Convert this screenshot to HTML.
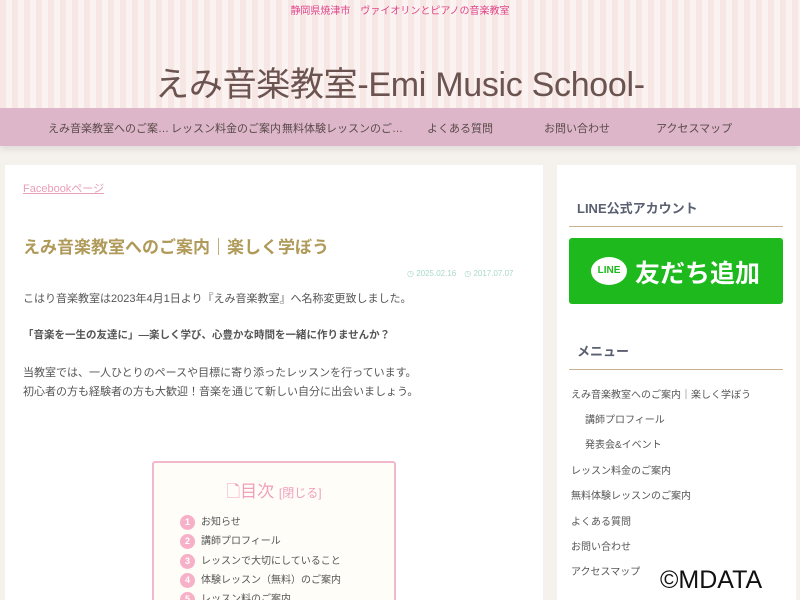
<!DOCTYPE html>
<html><head><meta charset="utf-8"><style>
*{margin:0;padding:0;box-sizing:border-box}
html,body{width:800px;height:600px;overflow:hidden}
body{background:#f5f1ed;font-family:"Liberation Sans","Noto Sans CJK JP",sans-serif;position:relative}
.hdr{position:absolute;left:0;top:0;width:800px;height:110px;background:repeating-linear-gradient(90deg,#f6e6e4 0 6px,#fbf3f1 6px 12px)}
.tag{position:absolute;top:2px;width:800px;text-align:center;font-size:10px;color:#e0458a}
.title{position:absolute;top:57px;width:800px;text-align:center;font-size:34px;color:#6b5350;letter-spacing:-0.3px}
.nav{position:absolute;top:108px;left:0;width:800px;height:38px;background:#ddb7c9;box-shadow:0 4px 6px rgba(0,0,0,.08)}
.nav span{position:absolute;top:12px;font-size:11px;color:#5a4a4a;white-space:nowrap}
.main{position:absolute;left:5px;top:165px;width:538px;height:440px;background:#fff;overflow:hidden}
.side{position:absolute;left:557px;top:165px;width:239px;height:440px;background:#fff}
.a{position:absolute;font-size:12px;color:#555;white-space:nowrap}
.n{display:inline-block;width:15px;height:15px;border-radius:50%;background:#f6b0c8;color:#fff;text-align:center;font-size:9px;line-height:15px;margin-right:6px}
</style></head><body>
<div class="hdr"><div class="tag">静岡県焼津市　ヴァイオリンとピアノの音楽教室</div><div class="title">えみ音楽教室-Emi Music School-</div></div>
<div class="nav">
<span style="left:48px">えみ音楽教室へのご案…</span>
<span style="left:171px">レッスン料金のご案内</span>
<span style="left:282px">無料体験レッスンのご…</span>
<span style="left:427px">よくある質問</span>
<span style="left:544px">お問い合わせ</span>
<span style="left:656px">アクセスマップ</span>
</div>
<div class="main">
<div class="a" style="left:18px;top:15px;color:#e8a0b8;text-decoration:underline;font-size:11px">Facebookページ</div>
<div class="a" style="left:18px;top:68px;font-size:17px;font-weight:bold;color:#b09a5a">えみ音楽教室へのご案内｜楽しく学ぼう</div>
<div class="a" style="left:402px;top:103px;font-size:8px;color:#a8d8c8">◷ 2025.02.16　◷ 2017.07.07</div>
<div class="a" style="left:18px;top:125px;font-size:11px">こはり音楽教室は2023年4月1日より『えみ音楽教室』へ名称変更致しました。</div>
<div class="a" style="left:18px;top:162px;font-size:10.5px;font-weight:bold;color:#555">「音楽を一生の友達に」—楽しく学び、心豊かな時間を一緒に作りませんか？</div>
<div class="a" style="left:18px;top:199px;font-size:11px;line-height:19px">当教室では、一人ひとりのペースや目標に寄り添ったレッスンを行っています。<br>初心者の方も経験者の方も大歓迎！音楽を通じて新しい自分に出会いましょう。</div>
<div style="position:absolute;left:147px;top:296px;width:244px;height:160px;border:2px solid #f2b8cc;border-radius:3px;background:#fffdf8">
<div style="position:absolute;top:14px;width:100%;text-align:center;color:#f0a0bc;font-size:17px">🗋目次 <span style="font-size:12px">[閉じる]</span></div>
<div style="position:absolute;left:26px;top:50px;font-size:10px;color:#555;line-height:19.3px">
<div><b class="n">1</b>お知らせ</div>
<div><b class="n">2</b>講師プロフィール</div>
<div><b class="n">3</b>レッスンで大切にしていること</div>
<div><b class="n">4</b>体験レッスン（無料）のご案内</div>
<div><b class="n">5</b>レッスン料のご案内</div>
</div></div>
</div>
<div class="side">
<div class="a" style="left:20px;top:33px;font-size:13px;font-weight:bold;color:#5a6070">LINE公式アカウント</div>
<div style="position:absolute;left:12px;top:61px;width:214px;height:1px;background:#c8b090"></div>
<div style="position:absolute;left:12px;top:73px;width:214px;height:66px;background:#1db91d;border-radius:3px">
<div style="position:absolute;left:22px;top:19px;width:36px;height:28px;border-radius:50%;background:#fff;color:#1db91d;font-size:10px;font-weight:bold;text-align:center;line-height:28px">LINE</div>
<div style="position:absolute;left:66px;top:16px;color:#fff;font-size:25px;font-weight:bold">友だち追加</div></div>
<div class="a" style="left:20px;top:176px;font-size:13px;font-weight:bold;color:#5a6070">メニュー</div>
<div style="position:absolute;left:12px;top:204px;width:214px;height:1px;background:#c8b090"></div>
<div class="a" style="left:14px;top:221px;font-size:10px">えみ音楽教室へのご案内｜楽しく学ぼう</div>
<div class="a" style="left:28px;top:246px;font-size:10px">講師プロフィール</div>
<div class="a" style="left:28px;top:271px;font-size:10px">発表会&amp;イベント</div>
<div class="a" style="left:14px;top:297px;font-size:10px">レッスン料金のご案内</div>
<div class="a" style="left:14px;top:322px;font-size:10px">無料体験レッスンのご案内</div>
<div class="a" style="left:14px;top:348px;font-size:10px">よくある質問</div>
<div class="a" style="left:14px;top:373px;font-size:10px">お問い合わせ</div>
<div class="a" style="left:14px;top:398px;font-size:10px">アクセスマップ</div>
</div>
<div style="position:absolute;left:660px;top:566px;font-size:25px;color:#111;background:rgba(255,255,255,.6)">©MDATA</div>
</body></html>
